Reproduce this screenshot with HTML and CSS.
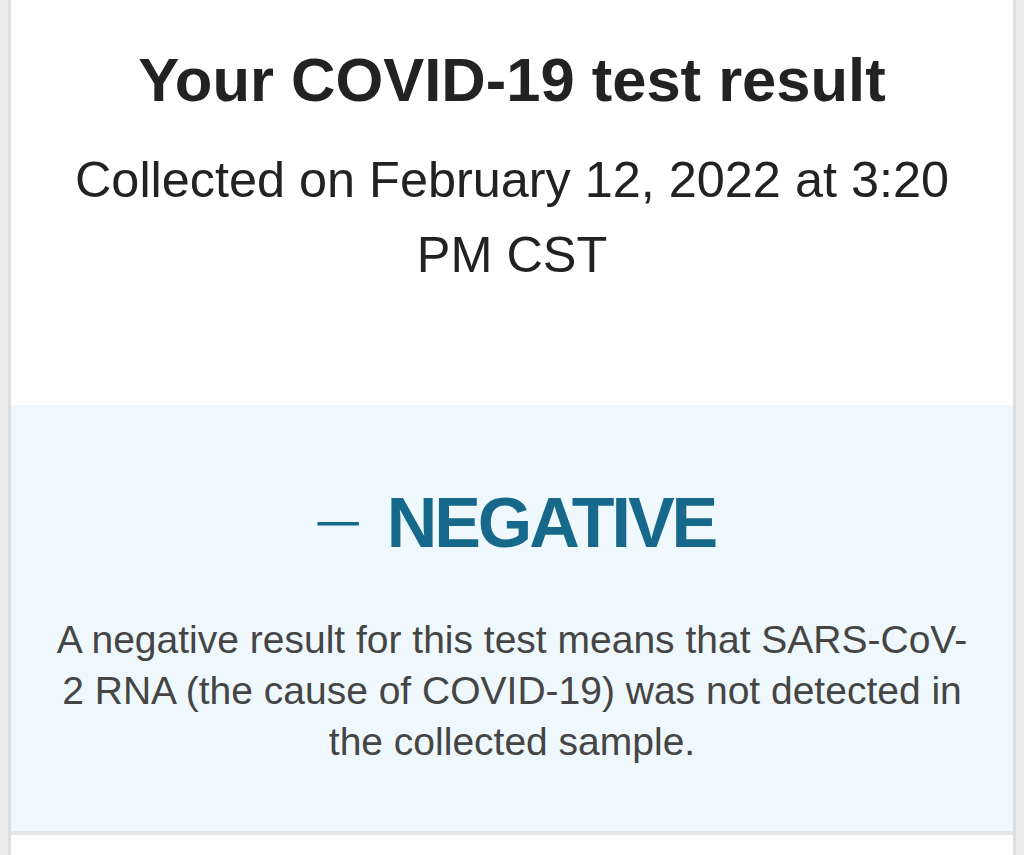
FILE: index.html
```html
<!DOCTYPE html>
<html lang="en">
<head>
<meta charset="utf-8">
<title>Your COVID-19 test result</title>
<link rel="stylesheet" href="styles.css">
</head>
<body>
<main class="card">
  <section class="header">
    <h1 class="title">Your COVID-19 test result</h1>
    <p class="collected">Collected on February 12, 2022 at 3:20 PM CST</p>
  </section>
  <section class="result">
    <h2 class="result-label"><span class="minus">−</span><span class="word">NEGATIVE</span></h2>
    <p class="result-text">A negative result for this test means that SARS-CoV-2 RNA (the cause of COVID-19) was not detected in the collected sample.</p>
  </section>
  <section class="next"></section>
</main>
</body>
</html>
```
FILE: styles.css
```css
html, body {
  margin: 0;
  padding: 0;
  background: #ececec;
  height: 100%;
  overflow: hidden;
}
body {
  font-family: "Liberation Sans", Arial, Helvetica, sans-serif;
}
.card {
  margin: 0 8px;
  border-left: 3px solid #dedede;
  border-right: 3px solid #dedede;
  background: #ffffff;
  min-height: 100%;
  display: flex;
  flex-direction: column;
}
.header {
  padding: 44px 40px 113px;
  text-align: center;
}
.title {
  margin: 0;
  font-size: 61.5px;
  line-height: 72px;
  font-weight: 700;
  color: #222222;
}
.collected {
  margin: 26px 0 0;
  font-size: 50.4px;
  line-height: 75px;
  color: #222222;
}
.result {
  background: #eff8fc;
  padding: 78px 40px 64px;
  text-align: center;
  border-bottom: 4px solid #e4e6e7;
}
.result-label {
  margin: 0;
  padding-left: 9px;
  font-size: 70px;
  line-height: 80px;
  font-weight: 700;
  color: #17698b;
}
.minus {
  display: inline-block;
  font-weight: 400;
  line-height: 40px;
  margin-right: 28px;
  transform: scale(1.22, 0.7);
}
.word {
  letter-spacing: -3px;
}
.result-text {
  margin: 51px 0 0;
  font-size: 39px;
  line-height: 51px;
  color: #454545;
}
.next {
  flex: 1;
  background: #ffffff;
}
```
